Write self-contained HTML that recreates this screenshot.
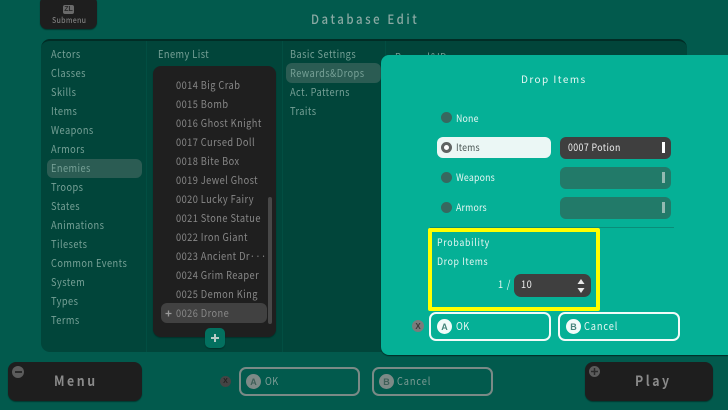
<!DOCTYPE html>
<html><head><meta charset="utf-8"><style>
*{margin:0;padding:0;box-sizing:border-box}
html,body{width:728px;height:410px;overflow:hidden;background:#025a4d}
body{position:relative;font-family:"Noto Sans CJK JP","Liberation Sans",sans-serif;font-weight:400}
.a{position:absolute}
.t{position:absolute;white-space:nowrap;line-height:16px;height:16px;font-size:10.5px;letter-spacing:.5px;transform:scaleX(.88);transform-origin:0 50%}
.s{color:#76a096}
.e{color:#888;left:176px}
.w{color:#e6f7f3}
.m{font-size:10px}
.btn{position:absolute;border-radius:7px}
.c{position:absolute;border-radius:50%;display:flex;align-items:center;justify-content:center;font-weight:700}
</style></head><body>
<!-- top -->
<div class="a" style="left:40px;top:-4px;width:57px;height:33px;background:#1e1e1e;border-radius:7px;box-shadow:0 1px 1px #01382f"></div>
<div class="a" style="left:63px;top:5px;width:11px;height:9px;background:#6a6a6a;border-radius:2px;color:#2a2a2a;font:700 7px/9px 'Liberation Sans',sans-serif;text-align:center">ZL</div>
<div class="t" style="left:52px;top:13px;font-size:8px;letter-spacing:.3px;color:#7d7d7d;font-weight:500">Submenu</div>
<div class="t" style="left:311px;top:11px;font-size:13px;letter-spacing:2.9px;color:#8aa9a3;font-weight:500">Database Edit</div>
<!-- main panel -->
<div class="a" style="left:41px;top:39px;width:646px;height:313px;background:#01453a;border-radius:9px;border-top:2px solid #012c25"></div>
<div class="a" style="left:146px;top:41px;width:1px;height:311px;background:#024e42"></div>
<div class="a" style="left:282px;top:41px;width:1px;height:311px;background:#024e42"></div>
<div class="a" style="left:385px;top:41px;width:1px;height:311px;background:#024e42"></div>
<div class="a" style="left:47px;top:159px;width:95px;height:19px;background:#2b5c53;border-radius:6px"></div>
<div class="t s" style="left:51px;top:47px">Actors</div>
<div class="t s" style="left:51px;top:66px">Classes</div>
<div class="t s" style="left:51px;top:85px">Skills</div>
<div class="t s" style="left:51px;top:104px">Items</div>
<div class="t s" style="left:51px;top:123px">Weapons</div>
<div class="t s" style="left:51px;top:142px">Armors</div>
<div class="t s" style="left:51px;top:161px">Enemies</div>
<div class="t s" style="left:51px;top:180px">Troops</div>
<div class="t s" style="left:51px;top:199px">States</div>
<div class="t s" style="left:51px;top:218px">Animations</div>
<div class="t s" style="left:51px;top:237px">Tilesets</div>
<div class="t s" style="left:51px;top:256px">Common Events</div>
<div class="t s" style="left:51px;top:275px">System</div>
<div class="t s" style="left:51px;top:294px">Types</div>
<div class="t s" style="left:51px;top:313px">Terms</div>
<div class="t s" style="left:158px;top:47px">Enemy List</div>
<!-- enemy list -->
<div class="a" style="left:153px;top:66px;width:123px;height:271px;background:#1f1f1f;border-radius:8px;box-shadow:0 1px 1px #01322a"></div>
<div class="a" style="left:268px;top:197px;width:4px;height:127px;background:#484848;border-radius:2px"></div>
<div class="a" style="left:161px;top:303px;width:106px;height:20px;background:#414141;border-radius:6px"></div>
<div class="t e" style="top:78px">0014 Big Crab</div>
<div class="t e" style="top:97px">0015 Bomb</div>
<div class="t e" style="top:116px">0016 Ghost Knight</div>
<div class="t e" style="top:135px">0017 Cursed Doll</div>
<div class="t e" style="top:154px">0018 Bite Box</div>
<div class="t e" style="top:173px">0019 Jewel Ghost</div>
<div class="t e" style="top:192px">0020 Lucky Fairy</div>
<div class="t e" style="top:211px">0021 Stone Statue</div>
<div class="t e" style="top:230px">0022 Iron Giant</div>
<div class="t e" style="top:249px">0023 Ancient Dr···</div>
<div class="t e" style="top:268px">0024 Grim Reaper</div>
<div class="t e" style="top:287px">0025 Demon King</div>
<div class="t e" style="top:306px">0026 Drone</div>
<svg class="a" style="left:164px;top:309px" width="9" height="9"><path d="M4.5 1.5v6M1.5 4.5h6" stroke="#9a9a9a" stroke-width="1.3"/></svg>
<div class="a" style="left:205px;top:328px;width:20px;height:20px;background:#03705f;border-radius:5px;box-shadow:0 1px 1px #01322a"></div>
<svg class="a" style="left:205px;top:328px" width="20" height="20"><path d="M10 6v8M6 10h8" stroke="#b7cbc6" stroke-width="2"/></svg>
<!-- col 2 -->
<div class="a" style="left:286px;top:63px;width:95px;height:20px;background:#2b5c53;border-radius:6px"></div>
<div class="t s" style="left:290px;top:47px">Basic Settings</div>
<div class="t s" style="left:290px;top:66px">Rewards&amp;Drops</div>
<div class="t s" style="left:290px;top:85px">Act. Patterns</div>
<div class="t s" style="left:290px;top:104px">Traits</div>
<div class="t s" style="left:395px;top:50px">Reward&amp;ID</div>
<!-- modal -->
<div class="a" style="left:381px;top:55px;width:347px;height:300px;background:#05b096;border-radius:8px 0 0 8px;box-shadow:0 1px 1px #012c25"></div>
<div class="t w" style="left:521px;top:71px;font-size:10px;letter-spacing:1.45px;transform:none">Drop Items</div>
<div class="a" style="left:437px;top:137px;width:114px;height:21px;background:#ebf7f5;border-radius:6px"></div>
<div class="c" style="left:441px;top:112px;width:11px;height:11px;background:#37685f"></div>
<div class="a" style="left:441px;top:142px;width:11px;height:11px;border-radius:50%;background:#fff;border:3px solid #5f6362"></div>
<div class="c" style="left:441px;top:172px;width:11px;height:11px;background:#37685f"></div>
<div class="c" style="left:441px;top:202px;width:11px;height:11px;background:#37685f"></div>
<div class="t w m" style="left:456px;top:110px;letter-spacing:.2px">None</div>
<div class="t m" style="left:456px;top:139px;letter-spacing:.2px;color:#4a5654">Items</div>
<div class="t w m" style="left:456px;top:169px;letter-spacing:.2px">Weapons</div>
<div class="t w m" style="left:456px;top:199px;letter-spacing:.2px">Armors</div>
<div class="a" style="left:560px;top:137px;width:111px;height:22px;background:#3f3f3f;border-radius:6px"></div>
<div class="a" style="left:662px;top:142px;width:3px;height:11px;background:#fff"></div>
<div class="t m" style="left:568px;top:139px;letter-spacing:.45px;color:#f0f0f0">0007 Potion</div>
<div class="a" style="left:560px;top:167px;width:111px;height:22px;background:#227a69;border-radius:6px"></div>
<div class="a" style="left:662px;top:172px;width:3px;height:11px;background:#93bab2"></div>
<div class="a" style="left:560px;top:197px;width:111px;height:22px;background:#227a69;border-radius:6px"></div>
<div class="a" style="left:662px;top:202px;width:3px;height:11px;background:#93bab2"></div>
<div class="a" style="left:430px;top:227px;width:244px;height:1px;background:#0a8d79"></div>
<div class="a" style="left:428px;top:228px;width:172px;height:83px;border:4px solid #ffff00;border-radius:2px"></div>
<div class="t w m" style="left:437px;top:234px;letter-spacing:.8px">Probability</div>
<div class="t w m" style="left:437px;top:253px;letter-spacing:.7px">Drop Items</div>
<div class="t w" style="left:498px;top:277px;letter-spacing:.9px">1 /</div>
<div class="a" style="left:514px;top:274px;width:77px;height:23px;background:#3f3f3f;border-radius:7px"></div>
<div class="t" style="left:521px;top:277px;color:#eee">10</div>
<svg class="a" style="left:576px;top:278px" width="10" height="16"><path d="M5 1l3.5 5h-7zM5 15l3.5-5h-7z" fill="#e8e8e8"/></svg>
<div class="c" style="left:412px;top:320px;width:12px;height:12px;background:#7b7b7b;color:#3a3a3a;font:700 8px 'Liberation Sans',sans-serif">X</div>
<div class="btn" style="left:429px;top:312px;width:122px;height:29px;border:2px solid #f2fbf9"></div>
<div class="c" style="left:437px;top:319px;width:15px;height:15px;background:#f2fbf9;color:#46847a;font:700 9px 'Liberation Sans',sans-serif">A</div>
<div class="t w" style="left:456px;top:319px">OK</div>
<div class="btn" style="left:558px;top:312px;width:122px;height:29px;border:2px solid #f2fbf9"></div>
<div class="c" style="left:566px;top:319px;width:15px;height:15px;background:#f2fbf9;color:#46847a;font:700 9px 'Liberation Sans',sans-serif">B</div>
<div class="t w" style="left:584px;top:319px;letter-spacing:1px">Cancel</div>
<!-- bottom -->
<div class="a" style="left:8px;top:362px;width:134px;height:39px;background:#1e1e1e;border-radius:8px;box-shadow:0 1px 1px #01382f"></div>
<div class="c" style="left:12px;top:366px;width:12px;height:12px;background:#5c5c5c"><span style="display:block;width:7px;height:2px;background:#2a2a2a"></span></div>
<div class="t" style="left:54px;top:373px;font-size:14px;font-weight:700;letter-spacing:2.9px;color:#8a8a8a">Menu</div>
<div class="a" style="left:585px;top:362px;width:128px;height:39px;background:#1e1e1e;border-radius:8px;box-shadow:0 1px 1px #01382f"></div>
<div class="c" style="left:589px;top:366px;width:11px;height:11px;background:#5c5c5c"></div>
<svg class="a" style="left:589px;top:366px" width="11" height="11"><path d="M5.5 2v7M2 5.5h7" stroke="#2a2a2a" stroke-width="1.5"/></svg>
<div class="t" style="left:635px;top:373px;font-size:14px;font-weight:700;letter-spacing:2.9px;color:#8a8a8a">Play</div>
<div class="c" style="left:220px;top:376px;width:11px;height:11px;background:#444;color:#222;font:700 7px 'Liberation Sans',sans-serif">X</div>
<div class="btn" style="left:239px;top:367px;width:121px;height:29px;border:2px solid #7a8a86"></div>
<div class="c" style="left:246px;top:374px;width:15px;height:15px;background:#7d8a87;color:#3f5f58;font:700 9px 'Liberation Sans',sans-serif">A</div>
<div class="t" style="left:265px;top:374px;color:#7d9c95">OK</div>
<div class="btn" style="left:372px;top:367px;width:121px;height:29px;border:2px solid #7a8a86"></div>
<div class="c" style="left:379px;top:374px;width:15px;height:15px;background:#7d8a87;color:#3f5f58;font:700 9px 'Liberation Sans',sans-serif">B</div>
<div class="t" style="left:397px;top:374px;letter-spacing:1px;color:#7d9c95">Cancel</div>
</body></html>
